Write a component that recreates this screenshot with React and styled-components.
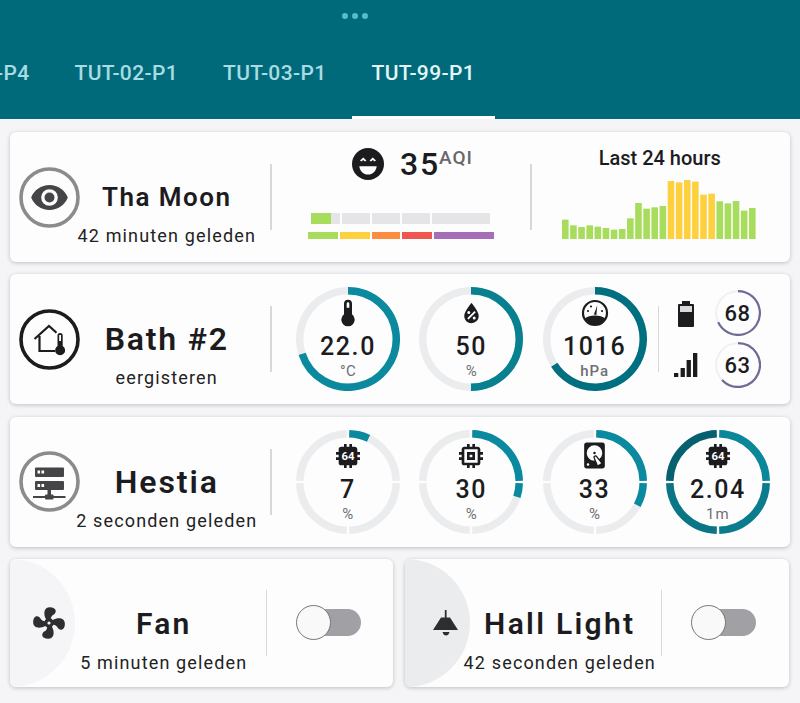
import React from "react";
import styled, { createGlobalStyle } from "styled-components";

const Global = createGlobalStyle`
  html, body { margin: 0; padding: 0; background: #f5f5f7; overflow: hidden; }
  body { font-family: Roboto, "Liberation Sans", sans-serif; color: #1c1c1e; }
  * { box-sizing: border-box; }
`;

const Page = styled.div`width: 800px; height: 703px; overflow: hidden; display: flex; flex-direction: column;`;
const Header = styled.header`height: 119px; background: #006a7b; overflow: hidden; display: flex; flex-direction: column; flex: none;`;
const Dots = styled.div`display: flex; gap: 4px; padding: 13px 0 0 342px; height: 19px;`;
const Dot = styled.span`width: 6px; height: 6px; border-radius: 50%; background: #55bccb;`;
const Tabs = styled.nav`display: flex; margin: 23px 0 0 -94px; gap: 5px; flex: 1;`;
const Tab = styled.div`
  width: 143.5px; flex: none; display: flex; justify-content: center; padding-top: 19px;
  font-size: 21px; font-weight: 500; line-height: 24px; letter-spacing: 0.35px; white-space: nowrap;
  color: ${p => (p.$active ? "#e4f5f7" : "#a8dbe2")};
  border-bottom: 3px solid ${p => (p.$active ? "#ffffff" : "transparent")};
`;
const Content = styled.main`display: flex; flex-direction: column; gap: 12.3px; padding: 13px 10px 0;`;
const Card = styled.section`
  height: ${p => p.$h || 130}px; flex: ${p => (p.$half ? "1" : "none")}; background: #fdfdfe; border-radius: 6px; display: flex; align-items: center;
  box-shadow: 0 1px 4px rgba(0,0,0,.22); overflow: hidden;
`;
const Split = styled.div`display: grid; grid-template-columns: 383px 384px; gap: 12px;`;
const Lead = styled.div`width: 259.5px; flex: none; display: flex; align-items: center; padding-left: 9px;`;
const Identity = styled.div`flex: 1; min-width: 0; height: 128px; padding: ${p => p.$top || 40}px ${p => p.$pr || 16}px 0 0; display: flex; flex-direction: column; align-items: center; white-space: nowrap;`;
const Name = styled.div`font-size: ${p => p.$size || 26}px; font-weight: 600; line-height: 48px; letter-spacing: ${p => p.$track || 1.5}px; color: #1c1c1e;`;
const Since = styled.div`font-size: 18px; line-height: 20px; margin-top: 5px; letter-spacing: 1.15px; color: #222;`;
const Rule = styled.div`width: ${p => p.$w || 2}px; height: 66px; background: #d8d8da; flex: none;`;
const Glyph = styled.svg`display: block; flex: none; fill: ${p => p.$fill || "#1c1c1e"};`;

const Aqi = styled.div`width: 258px; flex: none; align-self: stretch; display: flex; flex-direction: column; padding-top: 16px;`;
const AqiHead = styled.div`display: flex; align-items: center; height: 32px; padding-left: 80px; gap: 16.5px;`;
const AqiValue = styled.div`font-size: 32px; font-weight: 500; letter-spacing: 1.8px; line-height: 32px; display: flex;`;
const AqiUnit = styled.sup`font-size: 19px; font-weight: 500; color: #68686c; letter-spacing: 1px; line-height: 18px; margin: 1px 0 0 -1px; vertical-align: baseline;`;
const Scale = styled.div`display: flex; width: ${p => p.$w}px; height: ${p => p.$h}px; margin: ${p => p.$m} auto 0; gap: 2px;`;
const ScaleCell = styled.div`flex: ${p => p.$grow} 0 0; background: ${p => p.$bg}; overflow: hidden;`;
const ScaleFill = styled.div`height: 100%; background: #a8dc5c;`;

const History = styled.div`flex: 1; align-self: stretch; display: flex; flex-direction: column; align-items: center; padding: 16px 2px 0 0;`;
const HistoryTitle = styled.div`font-size: 20px; font-weight: 500; line-height: 21px; color: #1c1c1e;`;
const Chart = styled.svg`display: block; margin-top: 10px; width: 195px; height: 60px;`;

const Gauges = styled.div`display: flex; gap: 19.3px; padding-left: 24.5px; align-items: center;`;
const GaugeBox = styled.div`display: grid; width: ${p => p.$d}px; height: ${p => p.$d}px; flex: none; > * { grid-area: 1 / 1; }`;
const GaugeBody = styled.div`display: flex; flex-direction: column; align-items: center; padding-top: 12px;`;
const IconSlot = styled.div`height: 28px; display: flex; align-items: center; justify-content: center;`;
const GaugeValue = styled.div`font-size: 25px; font-weight: 500; letter-spacing: 1.6px; line-height: 26px; margin-top: 7px; color: #1c1c1e;`;
const GaugeUnit = styled.div`font-size: 15px; line-height: 16px; margin-top: 3px; color: #6f6f73; letter-spacing: ${p => p.$track || 0.3}px; font-weight: ${p => p.$weight || 400};`;
const Vitals = styled.div`display: flex; align-items: center; margin-left: 11px; gap: 14.5px;`;
const VitalColumn = styled.div`display: flex; flex-direction: column; gap: 26px; align-items: center; width: 24px; margin-left: 1px;`;
const MiniColumn = styled.div`display: flex; flex-direction: column; gap: 6px; margin-left: 2px;`;
const MiniValue = styled.div`display: flex; align-items: center; justify-content: center; font-size: 22px; font-weight: 500; letter-spacing: .5px; color: #1c1c1e;`;

const Disc = styled.div`width: 65px; height: 128px; flex: none; background: ${p => p.$bg}; border-radius: 0 64px 64px 0; display: flex; align-items: center; justify-content: center; padding-left: ${p => p.$shift}px;`;
const Toggle = styled.div`display: flex; align-items: center; margin-left: 29px; width: 65px; height: 35px; flex: none;`;
const Thumb = styled.div`width: 35px; height: 35px; border-radius: 50%; background: #f9f9fa; border: 1.5px solid #77777a; flex: none; z-index: 1;`;
const Track = styled.div`width: 48px; height: 27px; margin-left: -18px; flex: none; border-radius: 0 14px 14px 0; background: #a1a0a4;`;
const LeadHalf = styled.div`width: 255.5px; flex: none; display: flex; align-items: center;`;

const P = {
  eye: "M12,9A3,3 0 0,0 9,12A3,3 0 0,0 12,15A3,3 0 0,0 15,12A3,3 0 0,0 12,9M12,17A5,5 0 0,1 7,12A5,5 0 0,1 12,7A5,5 0 0,1 17,12A5,5 0 0,1 12,17M12,4.5C7,4.5 2.73,7.61 1,12C2.73,16.39 7,19.5 12,19.5C17,19.5 21.27,16.39 23,12C21.27,7.61 17,4.5 12,4.5Z",
  thermo: "M15 13V5A3 3 0 0 0 9 5V13A5 5 0 1 0 15 13M12 4A1 1 0 0 1 13 5V8H11V5A1 1 0 0 1 12 4Z",
  drop: "M12,3.25C12,3.25 6,10 6,14C6,17.32 8.69,20 12,20A6,6 0 0,0 18,14C18,10 12,3.25 12,3.25M14.47,9.97L15.53,11.03L9.53,17.03L8.47,15.97M9.75,10A1.25,1.25 0 0,1 11,11.25A1.25,1.25 0 0,1 9.75,12.5A1.25,1.25 0 0,1 8.5,11.25A1.25,1.25 0 0,1 9.75,10M14.25,14.5A1.25,1.25 0 0,1 15.5,15.75A1.25,1.25 0 0,1 14.25,17A1.25,1.25 0 0,1 13,15.75A1.25,1.25 0 0,1 14.25,14.5Z",
  fan: "M12,11A1,1 0 0,0 11,12A1,1 0 0,0 12,13A1,1 0 0,0 13,12A1,1 0 0,0 12,11M12.5,2C17,2 17.11,5.57 14.75,6.75C13.76,7.24 13.32,8.29 13.13,9.22C13.61,9.42 14.03,9.73 14.35,10.13C18.05,8.13 22.03,8.92 22.03,12.5C22.03,17 18.46,17.1 17.28,14.73C16.78,13.74 15.72,13.3 14.79,13.11C14.59,13.59 14.28,14 13.88,14.34C15.87,18.03 15.08,22 11.5,22C7,22 6.91,18.42 9.27,17.24C10.25,16.75 10.69,15.71 10.89,14.79C10.4,14.59 9.97,14.27 9.65,13.87C5.96,15.85 2,15.07 2,11.5C2,7 5.56,6.89 6.74,9.26C7.24,10.25 8.29,10.68 9.22,10.87C9.41,10.39 9.73,9.97 10.14,9.65C8.15,5.96 8.94,2 12.5,2Z",
  memory: "M17,17H7V7H17M21,11V9H19V7C19,5.89 18.1,5 17,5H15V3H13V5H11V3H9V5H7C5.89,5 5,5.89 5,7V9H3V11H5V13H3V15H5V17A2,2 0 0,0 7,19H9V21H11V19H13V21H15V19H17A2,2 0 0,0 19,17V15H21V13H19V11M13,13H11V11H13M15,9H9V15H15V9Z",
  cpu: "M9,3V5H7A2,2 0 0,0 5,7V9H3V11H5V13H3V15H5V17A2,2 0 0,0 7,19H9V21H11V19H13V21H15V19H17A2,2 0 0,0 19,17V15H21V13H19V11H21V9H19V7C19,5.89 18.1,5 17,5H15V3H13V5H11V3H9Z",
  disk: "M6,2H18A2,2 0 0,1 20,4V20A2,2 0 0,1 18,22H6A2,2 0 0,1 4,20V4A2,2 0 0,1 6,2M12,4A6,6 0 0,0 6,10C6,13.31 8.69,16 12.1,16L11.22,13.77C10.95,13.29 11.11,12.68 11.59,12.4L12.45,11.9C12.93,11.63 13.54,11.79 13.82,12.27L15.74,14.69C17.12,13.59 18,11.9 18,10A6,6 0 0,0 12,4M12,9A1,1 0 0,1 13,10A1,1 0 0,1 12,11A1,1 0 0,1 11,10A1,1 0 0,1 12,9M7,18A1,1 0 0,0 6,19A1,1 0 0,0 7,20A1,1 0 0,0 8,19A1,1 0 0,0 7,18M12.09,13.27L14.58,19.58L17.17,18.08L12.95,12.77L12.09,13.27Z",
};

const Icon = ({ d, size, fill }) => (
  <Glyph viewBox="0 0 24 24" width={size} height={size} $fill={fill}><path d={d} /></Glyph>
);

const Cpu64 = () => (
  <Glyph viewBox="0 0 24 24" width={32} height={32}>
    <path d={P.cpu} />
    <text x="12" y="15" fontSize="8.5" fontWeight="700" fontFamily="Roboto, sans-serif" fill="#fff" textAnchor="middle">64</text>
  </Glyph>
);

const GaugeIcon = () => (
  <Glyph viewBox="0 0 28 28" width={28} height={28}>
    <circle cx="14" cy="14" r="12" fill="none" stroke="#1c1c1e" strokeWidth="2.2" />
    <path d="M3.8 19.5 C8 15.5 20 15.5 24.2 19.5 C22 24 18 26 14 26 C10 26 6 24 3.8 19.5Z" />
    <path d="M12.9 15.5 L16.2 6.5 L15.4 16Z" />
    <circle cx="7" cy="12" r="1.1" /><circle cx="10" cy="7.5" r="1.1" /><circle cx="21" cy="12" r="1.1" />
  </Glyph>
);

const Ring = ({ color, children }) => (
  <Glyph viewBox="0 0 61 61" width={61} height={61}>
    <circle cx="30.5" cy="30.5" r="28.5" fill="none" stroke={color} strokeWidth="3.6" />
    {children}
  </Glyph>
);

const EyeRing = () => (
  <Ring color="#8b8b8d">
    <svg x="10.5" y="10.5" width="40" height="40" viewBox="0 0 24 24"><path d={P.eye} fill="#454547" /></svg>
  </Ring>
);

const HomeRing = () => (
  <Ring color="#1c1c1e">
    <path d="M15.5 30 L30 17 L37.5 23.8 M20.5 27 V42 H36" fill="none" stroke="#1c1c1e" strokeWidth="2.2" />
    <path d="M38.5 26.5 a2.6 2.6 0 0 1 5.2 0 V37 a5 5 0 1 1 -5.2 0Z" fill="#1c1c1e" />
    <rect x="40.2" y="26" width="1.8" height="6" fill="#fff" />
  </Ring>
);

const ServerRing = () => (
  <Ring color="#8b8b8d">
    <g fill="#454547">
      <rect x="16" y="16.5" width="29" height="9.5" rx="1" />
      <rect x="16" y="30" width="29" height="9" rx="1" />
      <rect x="28.5" y="38" width="3.5" height="6" />
      <rect x="14" y="45" width="32.5" height="2" />
      <rect x="26" y="43.5" width="8.5" height="5" rx="1" />
    </g>
    <g fill="#fff">
      <rect x="18.5" y="19.5" width="2.6" height="3" /><rect x="22.5" y="19.5" width="2.6" height="3" />
      <rect x="18.5" y="33" width="2.6" height="3" /><rect x="22.5" y="33" width="2.6" height="3" />
    </g>
  </Ring>
);

const Face = () => (
  <Glyph viewBox="0 0 32 32" width={32} height={32}>
    <circle cx="16" cy="16" r="16" />
    <path d="M8 12.6 L11.2 9.6 L14.4 12.6 L13 13.6 L11.2 12 L9.4 13.6Z M17.6 12.6 L20.8 9.6 L24 12.6 L22.6 13.6 L20.8 12 L19 13.6Z" fill="#fff" />
    <path d="M7.3 18.3 H24.7 C24.2 23 20.5 26.6 16 26.6 C11.5 26.6 7.8 23 7.3 18.3Z" fill="#fff" />
  </Glyph>
);

const Lamp = () => (
  <Glyph viewBox="0 0 26 26" width={26} height={26} $fill="#2e2e30">
    <rect x="11.8" y="0" width="1.8" height="8" />
    <path d="M8 7.5 H17 L25 20 H0Z" />
    <path d="M9.5 22 H16.5 C16 24.5 14.5 25.5 13 25.5 C11.5 25.5 10 24.5 9.5 22Z" />
  </Glyph>
);

const Battery = () => (
  <Glyph viewBox="0 0 16 26" width={16} height={26}>
    <path d="M4 0 H12 V3 H15 A1 1 0 0 1 16 4 V25 A1 1 0 0 1 15 26 H1 A1 1 0 0 1 0 25 V4 A1 1 0 0 1 1 3 H4Z" />
    <rect x="2" y="5" width="12" height="6" fill="#d9d9db" />
  </Glyph>
);

const Signal = () => (
  <Glyph viewBox="0 0 24 24" width={24} height={24}>
    <rect x="0" y="20" width="4.3" height="4" /><rect x="6.6" y="15" width="4.3" height="9" />
    <rect x="12.6" y="7" width="4.3" height="17" /><rect x="19" y="0" width="4.3" height="24" />
  </Glyph>
);

const arc = (c, r, a, b) => {
  const pt = f => {
    const t = 2 * Math.PI * f;
    return [c + r * Math.sin(t), c - r * Math.cos(t)];
  };
  const [x1, y1] = pt(a);
  const [x2, y2] = pt(Math.min(b, a + 0.9999));
  return `M${x1.toFixed(2)} ${y1.toFixed(2)}A${r} ${r} 0 ${b - a > 0.5 ? 1 : 0} 1 ${x2.toFixed(2)} ${y2.toFixed(2)}`;
};

const Dial = ({ d = 104, w = 7.5, value, color, segmented, colors, track = "#ebecee" }) => {
  const c = d / 2;
  const r = c - w / 2;
  const parts = segmented ? [[0.004, 0.246], [0.254, 0.496], [0.504, 0.746], [0.754, 0.996]] : [[0, 1]];
  return (
    <svg width={d} height={d} viewBox={`0 0 ${d} ${d}`}>
      {parts.map(([a, b], i) => <path key={i} d={arc(c, r, a, b)} fill="none" stroke={track} strokeWidth={w} />)}
      {parts.map(([a, b], i) =>
        value / 100 > a ? (
          <path key={`v${i}`} d={arc(c, r, a, Math.min(b, value / 100))} fill="none" stroke={colors ? colors[i] : color} strokeWidth={w} />
        ) : null
      )}
    </svg>
  );
};

const Gauge = ({ icon, val, unit, unitTrack, unitWeight, ...dial }) => (
  <GaugeBox $d={104}>
    <Dial {...dial} />
    <GaugeBody>
      <IconSlot>{icon}</IconSlot>
      <GaugeValue>{val}</GaugeValue>
      <GaugeUnit $track={unitTrack} $weight={unitWeight}>{unit}</GaugeUnit>
    </GaugeBody>
  </GaugeBox>
);

const Mini = ({ val, value }) => (
  <GaugeBox $d={46}>
    <Dial d={46} w={2.2} value={value} color="#6d6c96" track="#f1f1f3" />
    <MiniValue>{val}</MiniValue>
  </GaugeBox>
);

const bars = [285, 302, 307, 302, 306, 310, 315, 313, 281, 235, 252, 248, 244, 169, 173, 166, 171, 210, 207, 230, 236, 229, 258, 250];
const scaleTop = [29, 28, 28.5, 28, 58];
const scaleBottom = [[31, "#a8dc5c"], [29.5, "#fdd03f"], [28.5, "#fb8c42"], [29.5, "#ef5650"], [60, "#a56db8"]];

export default function App() {
  return (
    <Page>
      <Global />
      <Header>
        <Dots><Dot /><Dot /><Dot /></Dots>
        <Tabs>
          <Tab>TUT-01-P4</Tab>
          <Tab>TUT-02-P1</Tab>
          <Tab>TUT-03-P1</Tab>
          <Tab $active>TUT-99-P1</Tab>
        </Tabs>
      </Header>
      <Content>
        <Card>
          <Lead>
            <EyeRing />
            <Identity><Name>Tha Moon</Name><Since>42 minuten geleden</Since></Identity>
          </Lead>
          <Rule />
          <Aqi>
            <AqiHead>
              <Face />
              <AqiValue>35<AqiUnit>AQI</AqiUnit></AqiValue>
            </AqiHead>
            <Scale $w={180} $h={11} $m="33px">
              {scaleTop.map((g, i) => (
                <ScaleCell key={i} $grow={g} $bg="#e5e5e7">{i === 0 && <ScaleFill style={{ width: "70%" }} />}</ScaleCell>
              ))}
            </Scale>
            <Scale $w={186} $h={7} $m="8px">
              {scaleBottom.map(([g, c]) => <ScaleCell key={c} $grow={g} $bg={c} />)}
            </Scale>
          </Aqi>
          <Rule />
          <History>
            <HistoryTitle>Last 24 hours</HistoryTitle>
            <Chart viewBox="0 0 195 60">
              {bars.map((y, i) => {
                const h = (343 - y) / 3;
                return <rect key={i} x={i * 8.13} y={60 - h} width="6.6" height={h} fill={i >= 13 && i <= 18 ? "#fdd03f" : "#a8dc5c"} />;
              })}
            </Chart>
          </History>
        </Card>

        <Card>
          <Lead>
            <HomeRing />
            <Identity><Name $size={32} $track={1.8}>Bath #2</Name><Since>eergisteren</Since></Identity>
          </Lead>
          <Rule />
          <Gauges>
            <Gauge icon={<Icon d={P.thermo} size={32} />} val="22.0" unit="°C" value={70} color="#0b8a9f" />
            <Gauge icon={<Icon d={P.drop} size={29} />} val="50" unit="%" value={50} color="#09808f" />
            <Gauge icon={<GaugeIcon />} val="1016" unit="hPa" unitTrack={1} unitWeight={500} value={66} color="#006f80" />
          </Gauges>
          <Vitals>
            <Rule $w={1} />
            <VitalColumn><Battery /><Signal /></VitalColumn>
            <MiniColumn><Mini val="68" value={68} /><Mini val="63" value={63} /></MiniColumn>
          </Vitals>
        </Card>

        <Card>
          <Lead>
            <ServerRing />
            <Identity><Name $size={32} $track={1.9}>Hestia</Name><Since>2 seconden geleden</Since></Identity>
          </Lead>
          <Rule />
          <Gauges>
            <Gauge icon={<Cpu64 />} val="7" unit="%" value={7} color="#0b8a9f" segmented />
            <Gauge icon={<Icon d={P.memory} size={32} />} val="30" unit="%" value={30} color="#0b8a9f" segmented />
            <Gauge icon={<Icon d={P.disk} size={31} />} val="33" unit="%" value={33} color="#0b8a9f" segmented />
            <Gauge icon={<Cpu64 />} val="2.04" unit="1m" unitTrack={1} value={100} segmented colors={["#0b8799", "#0a7c8e", "#0a7685", "#06606f"]} />
          </Gauges>
        </Card>

        <Split>
          <Card $h={128} $half>
            <LeadHalf>
              <Disc $bg="#f5f5f7" $shift={13}><Icon d={P.fan} size={38} fill="#2e2e30" /></Disc>
              <Identity $top={41} $pr={13}><Name $size={30} $track={2.2}>Fan</Name><Since>5 minuten geleden</Since></Identity>
            </LeadHalf>
            <Rule $w={1} />
            <Toggle><Thumb /><Track /></Toggle>
          </Card>
          <Card $h={128} $half>
            <LeadHalf>
              <Disc $bg="#ebecee" $shift={16}><Lamp /></Disc>
              <Identity $top={41} $pr={11}><Name $size={30} $track={2.3}>Hall Light</Name><Since>42 seconden geleden</Since></Identity>
            </LeadHalf>
            <Rule $w={1} />
            <Toggle><Thumb /><Track /></Toggle>
          </Card>
        </Split>
      </Content>
    </Page>
  );
}
